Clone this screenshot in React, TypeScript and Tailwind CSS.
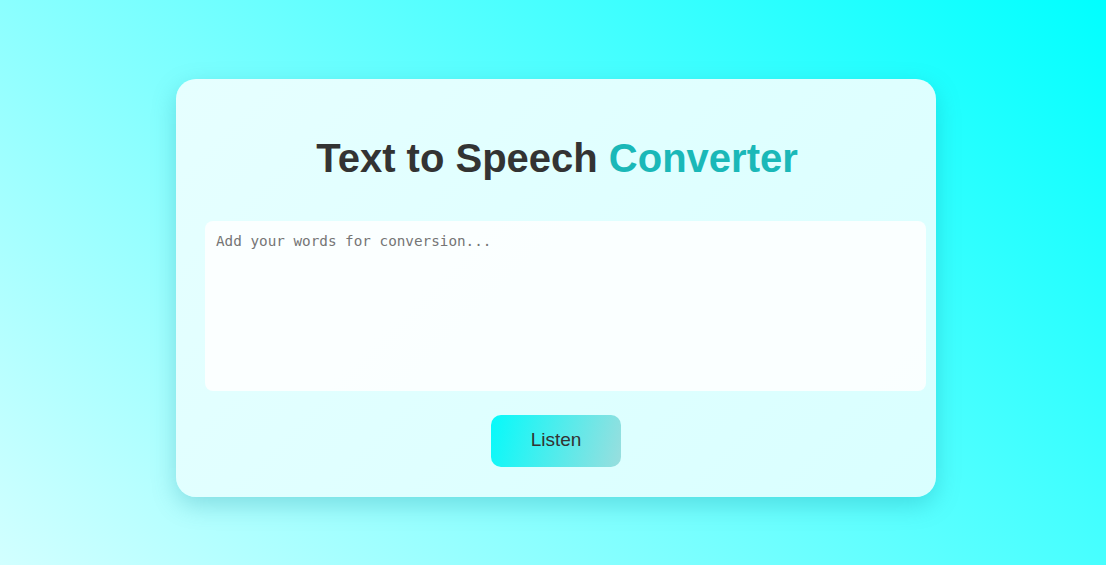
import { useState } from "react"

export default function App() {
  const [text, setText] = useState("")

  const speak = () => {
    if (!text.trim() || typeof window === "undefined" || !("speechSynthesis" in window)) return
    window.speechSynthesis.speak(new SpeechSynthesisUtterance(text))
  }

  return (
    <div className="min-h-[565px] w-full flex items-center justify-center pl-[6px] pt-[10px] bg-[linear-gradient(45deg,#d2ffff,#00ffff)] font-['Liberation_Sans',Arial,sans-serif]">
      <div className="w-[760px] h-[418px] rounded-[20px] bg-[linear-gradient(135deg,#e6ffff,#d9ffff)] shadow-[0_8px_24px_rgba(0,120,140,0.25)] px-[29px] pt-[53px] flex flex-col items-start">
        <h1 className="w-[704px] text-center text-[40px] font-bold leading-[52px] text-[#333333]">
          Text to Speech <span className="text-[#1ab8b8]">Converter</span>
        </h1>

        <textarea
          value={text}
          onChange={(e) => setText(e.target.value)}
          placeholder="Add your words for conversion..."
          className="mt-[37px] w-[721px] h-[170px] resize-none rounded-[8px] bg-white/85 px-[11px] py-[10px] font-['DejaVu_Sans_Mono',monospace] text-[14.3px] leading-[20px] text-[#333] placeholder:text-[#757575] outline-none"
        />

        <div className="w-[702px] flex justify-center mt-[24px]">
          <button
            onClick={speak}
            className="w-[130px] h-[52px] rounded-[10px] bg-[linear-gradient(105deg,#05fafa,#99dede)] text-[19px] text-[#333333] cursor-pointer"
          >
            Listen
          </button>
        </div>
      </div>
    </div>
  )
}
